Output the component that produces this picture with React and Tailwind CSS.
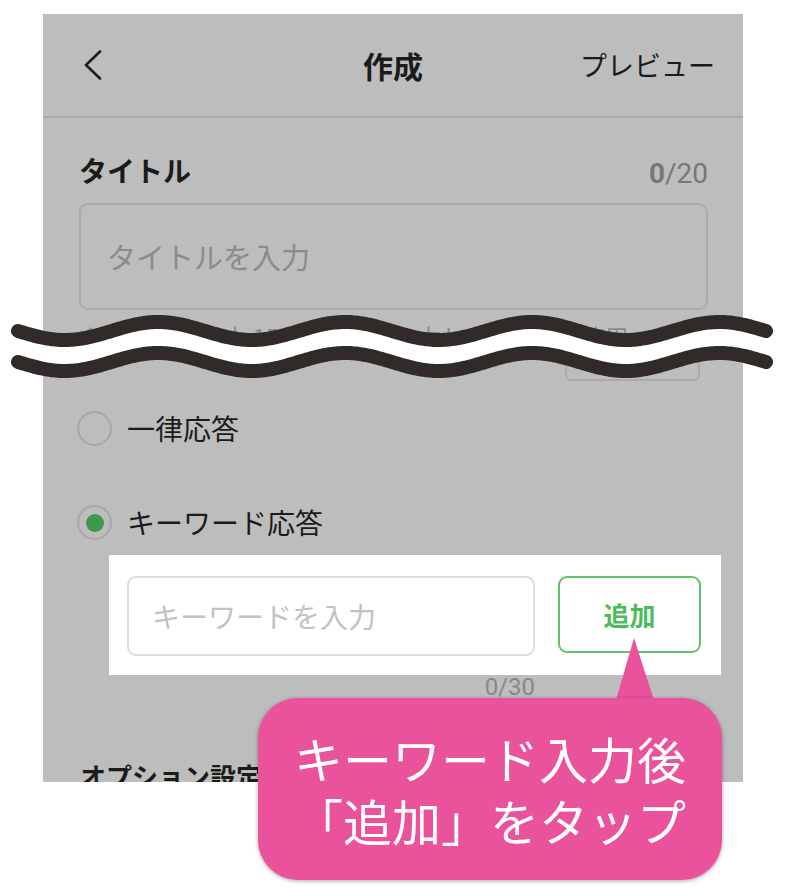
import React from "react";

function wavePoints(c, A, x0 = 18, x1 = 766, period = 187) {
  const pts = [];
  for (let x = x0; x <= x1; x += 2) {
    pts.push([x, +(c + A * Math.sin((2 * Math.PI * (x - x0)) / period)).toFixed(2)]);
  }
  return pts;
}

const toStr = (pts) => pts.map((p) => p.join(",")).join(" ");

export default function App() {
  const top = wavePoints(331, 9);
  const bot = wavePoints(362, 9);
  const fill = toStr([...top, ...bot.slice().reverse()]);

  return (
    <div className="relative w-[786px] h-[896px] bg-white overflow-hidden pt-[14px] font-['Noto_Sans_CJK_JP','Noto_Sans',sans-serif]">
      {/* phone screenshot */}
      <div className="ml-[43px] w-[700px] h-[768px] bg-[#bdbdbd] overflow-hidden flex flex-col">
        {/* header */}
        <div className="h-[104px] shrink-0 border-b-2 border-[#a9a9ae] grid grid-cols-[1fr_auto_1fr] items-center">
          <div className="pl-[39px] flex items-center">
            <svg width="20" height="30" viewBox="0 0 20 30" fill="none">
              <path d="M18 1.5 L4 15 L18 28.5" stroke="#1f1f1f" strokeWidth="2.6" strokeLinecap="round" strokeLinejoin="round" />
            </svg>
          </div>
          <div className="text-[30px] font-bold text-[#1b1b1b] leading-[40px]">作成</div>
          <div className="justify-self-end pr-[28px] text-[27px] text-[#1b1b1b] leading-[40px]">プレビュー</div>
        </div>

        {/* title section */}
        <div className="px-[36px] pr-[35px]">
          <div className="mt-[32px] h-[40px] flex justify-between items-start">
            <div className="text-[28px] font-bold leading-[40px] text-[#1b1b1b]">タイトル</div>
            <div className="pt-[8px] font-['Roboto',sans-serif] text-[28px] leading-[32px] text-[#777777]">
              <span className="font-bold">0</span>/20
            </div>
          </div>
          <div className="mt-[13px] h-[107px] rounded-[9px] border-2 border-[#aaaaaa] flex items-center pl-[26px]">
            <span className="text-[29px] text-[#8b8b8b] leading-[40px] -mt-[2px]">タイトルを入力</span>
          </div>
          <div className="mt-[15px] text-[24px] leading-[24px] text-[#8b8b8b] whitespace-nowrap">
            タイトルは最大 15 0文字まで入力し、Mとして使用
          </div>
        </div>
        <div className="flex justify-end pr-[43px]">
          <div className="w-[135px] h-[32px] border-2 border-[#aaaaaa] rounded-[6px]"></div>
        </div>

        {/* radios */}
        <div className="mt-[30px] flex items-center pl-[34px]">
          <div className="w-[35px] h-[35px] rounded-full border-2 border-[#a7a7a7]"></div>
          <div className="ml-[15px] text-[28px] leading-[35px] text-[#1b1b1b]">一律応答</div>
        </div>
        <div className="mt-[33px] mx-[6px] h-px bg-[#b0b0b0]"></div>
        <div className="mt-[26px] flex items-center pl-[34px]">
          <div className="w-[35px] h-[35px] rounded-full border-2 border-[#a7a7a7] flex items-center justify-center">
            <div className="w-[18px] h-[18px] rounded-full bg-[#3d9a4a]"></div>
          </div>
          <div className="ml-[15px] text-[28px] leading-[35px] text-[#1b1b1b]">キーワード応答</div>
        </div>

        {/* highlighted input area */}
        <div className="mt-[15px] ml-[66px] w-[612px] h-[120px] shrink-0 bg-white flex items-start pt-[21px] pl-[18px] gap-[23px]">
          <div className="w-[408px] h-[80px] rounded-[9px] border-2 border-[#dddddd] flex items-center pl-[23px]">
            <span className="text-[28px] text-[#c2c2c2] leading-[40px]">キーワードを入力</span>
          </div>
          <div className="w-[143px] h-[77px] rounded-[9px] border-2 border-[#5dc46a] flex items-center justify-center">
            <span className="text-[26px] font-bold text-[#4cbb5b] leading-[36px]">追加</span>
          </div>
        </div>
        <div className="w-[492px] text-right font-['Roboto',sans-serif] text-[24px] leading-[24px] text-[#888888]">0/30</div>

        <div className="mt-[59px] pl-[37px] text-[26px] font-bold leading-[36px] text-[#1b1b1b] whitespace-nowrap">オプション設定</div>
      </div>

      {/* callout pointer */}
      <svg className="absolute left-[610px] top-[636px]" width="50" height="66" viewBox="0 0 50 66">
        <polygon points="24,2 6,64 44,64" fill="#ea539c" />
      </svg>
      {/* callout */}
      <div className="absolute left-[258px] top-[698px] w-[464px] h-[182px] rounded-[40px] bg-[#ea539c] shadow-[0_1px_4px_rgba(0,0,0,0.35)] flex flex-col items-center justify-center text-white text-[49px] leading-[62px] text-center">
        <div>キーワード入力後</div>
        <div>「追加」をタップ</div>
      </div>

      {/* wave cut marks */}
      <svg className="absolute left-0 top-0 pointer-events-none" width="786" height="896" viewBox="0 0 786 896">
        <polygon points={fill} fill="#ffffff" />
        <polyline points={toStr(top)} fill="none" stroke="#302b29" strokeWidth="14" strokeLinecap="round" strokeLinejoin="round" />
        <polyline points={toStr(bot)} fill="none" stroke="#302b29" strokeWidth="14" strokeLinecap="round" strokeLinejoin="round" />
      </svg>
    </div>
  );
}
